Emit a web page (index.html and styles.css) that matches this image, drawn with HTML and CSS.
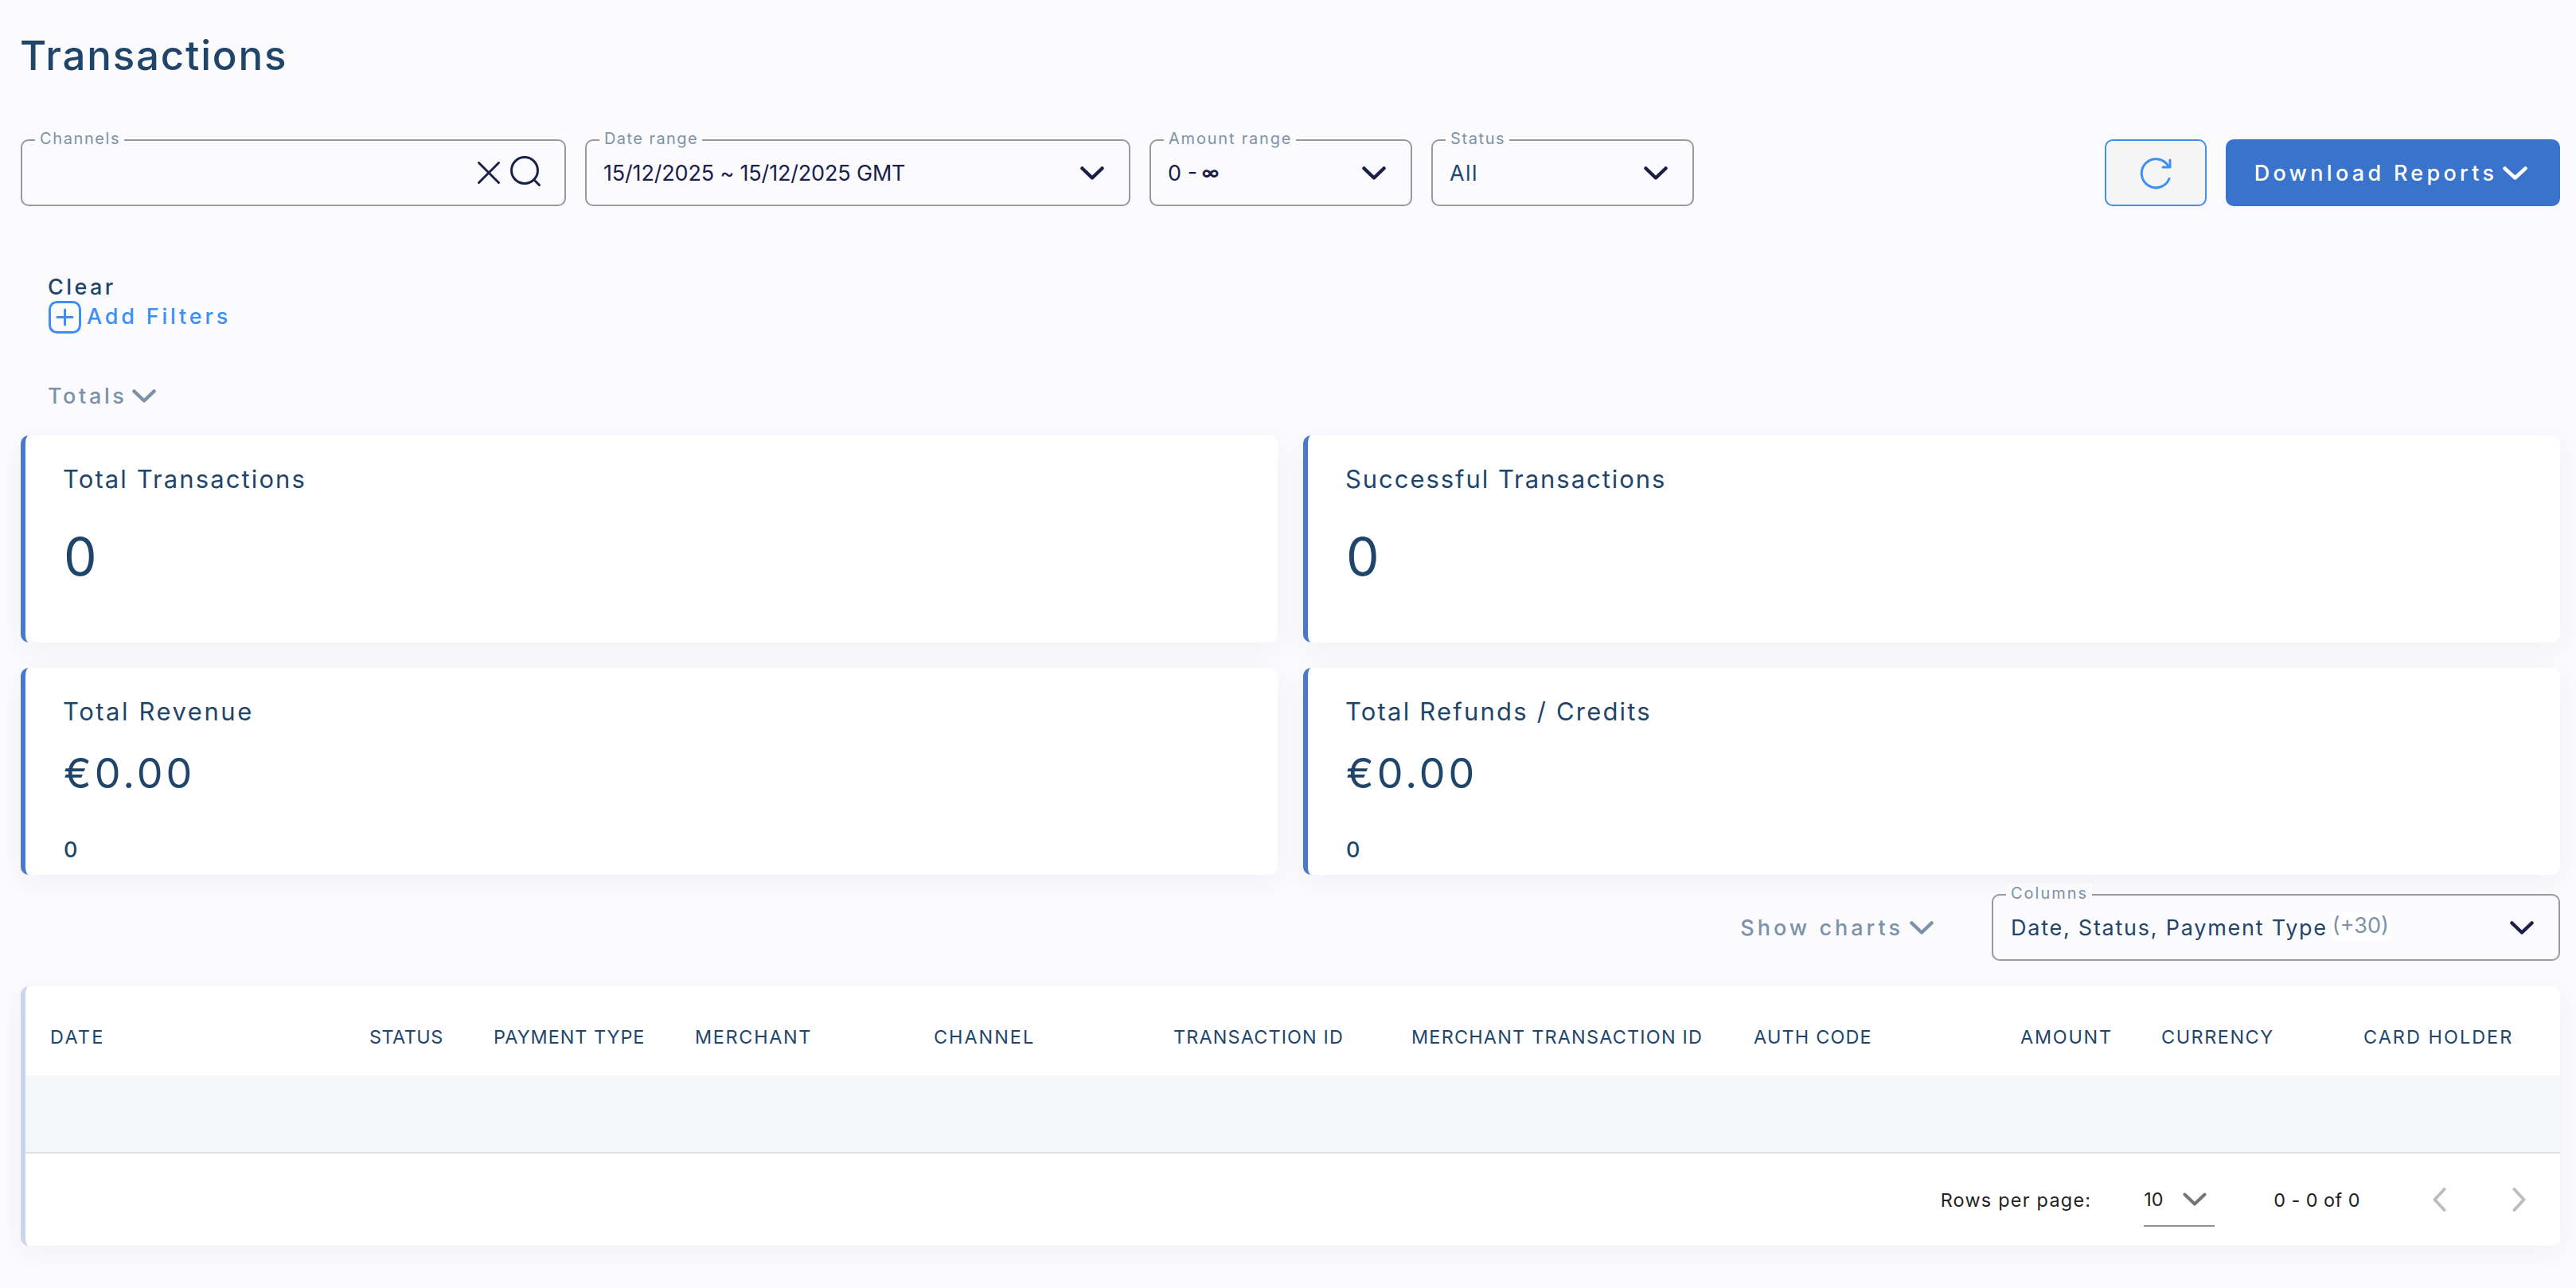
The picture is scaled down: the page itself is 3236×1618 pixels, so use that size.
FILE: index.html
```
<!DOCTYPE html>
<html lang="en">
<head>
    <meta charset="UTF-8">
    <meta name="viewport" content="width=device-width, initial-scale=1.0">
    <title>Transactions</title>
    <link rel="stylesheet" href="styles.css">
</head>
<body>
    <div class="page">
        <h1 class="title">Transactions</h1>

        <div class="filters">
            <div class="field field-wide">
                <span class="field-label label-channels">Channels</span>
                <svg class="icon-clear" width="30" height="30" viewBox="0 0 30 30"><path d="M2.5 2.5l25 25M27.5 2.5l-25 25"/></svg>
                <svg class="icon-search" width="38" height="38" viewBox="0 0 38 38"><circle cx="18" cy="18" r="16.5"/><path d="M30 30l6.5 6.5"/></svg>
            </div>
            <div class="field field-wide">
                <span class="field-label label-date">Date range</span>
                <span class="field-value value-date">15/12/2025 ~ 15/12/2025 GMT</span>
                <svg class="chevron" width="30" height="17" viewBox="0 0 30 17"><path d="M2.5 2.5L15 14.5l12.5-12"/></svg>
            </div>
            <div class="field">
                <span class="field-label label-amount">Amount range</span>
                <span class="field-value value-amount">0 - <b>∞</b></span>
                <svg class="chevron" width="30" height="17" viewBox="0 0 30 17"><path d="M2.5 2.5L15 14.5l12.5-12"/></svg>
            </div>
            <div class="field">
                <span class="field-label label-status">Status</span>
                <span class="field-value value-status">All</span>
                <svg class="chevron" width="30" height="17" viewBox="0 0 30 17"><path d="M2.5 2.5L15 14.5l12.5-12"/></svg>
            </div>
            <button class="refresh">
                <svg width="40" height="42" viewBox="0 0 40 42"><path d="M37 28.5A18 18 0 1 1 36 13"/><path d="M38 5V14H29"/></svg>
            </button>
            <button class="download">
                <span>Download Reports</span>
                <svg class="chevron" width="31" height="17" viewBox="0 0 31 17"><path d="M2.5 2.5l13 12 13-12"/></svg>
            </button>
        </div>

        <div class="links">
            <a class="clear">Clear</a>
            <a class="add-filters">
                <svg width="41" height="41" viewBox="0 0 41 41"><rect x="1.5" y="1.5" width="38" height="38" rx="9"/><path d="M20.5 11v19M11 20.5h19"/></svg>
                <span>Add Filters</span>
            </a>
            <a class="totals">
                <span>Totals</span>
                <svg class="chevron" width="30" height="17" viewBox="0 0 30 17"><path d="M2.5 2.5L15 14.5l12.5-12"/></svg>
            </a>
        </div>

        <div class="cards">
            <div class="card">
                <h2 class="name-total">Total Transactions</h2>
                <p class="count">0</p>
            </div>
            <div class="card">
                <h2 class="name-successful">Successful Transactions</h2>
                <p class="count">0</p>
            </div>
            <div class="card">
                <h2 class="name-revenue">Total Revenue</h2>
                <p class="sum">€0.00</p>
                <p class="small-count">0</p>
            </div>
            <div class="card">
                <h2 class="name-refunds">Total Refunds / Credits</h2>
                <p class="sum">€0.00</p>
                <p class="small-count">0</p>
            </div>
        </div>

        <div class="toolbar">
            <a class="show-charts">
                <span>Show charts</span>
                <svg class="chevron" width="30" height="17" viewBox="0 0 30 17"><path d="M2.5 2.5L15 14.5l12.5-12"/></svg>
            </a>
            <div class="field field-columns">
                <span class="field-label label-columns">Columns</span>
                <span class="field-value value-columns">Date, Status, Payment Type</span>
                <span class="more">(+30)</span>
                <svg class="chevron" width="30" height="17" viewBox="0 0 30 17"><path d="M2.5 2.5L15 14.5l12.5-12"/></svg>
            </div>
        </div>

        <div class="table">
            <div class="table-head">
                <span class="col-date">DATE</span>
                <span class="col-status">STATUS</span>
                <span class="col-type">PAYMENT TYPE</span>
                <span class="col-merchant">MERCHANT</span>
                <span class="col-channel">CHANNEL</span>
                <span class="col-id">TRANSACTION ID</span>
                <span class="col-merchant-id">MERCHANT TRANSACTION ID</span>
                <span class="col-auth">AUTH CODE</span>
                <span class="col-amount">AMOUNT</span>
                <span class="col-currency">CURRENCY</span>
                <span class="col-holder">CARD HOLDER</span>
            </div>
            <div class="table-empty"></div>
            <div class="pagination">
                <span class="rows-label">Rows per page:</span>
                <div class="rows-select">
                    <span>10</span>
                    <svg class="chevron" width="30" height="17" viewBox="0 0 30 17"><path d="M2.5 2.5L15 14.5l12.5-12"/></svg>
                </div>
                <span class="rows-range">0 - 0 of 0</span>
                <svg class="arrow" width="17" height="30" viewBox="0 0 17 30"><path d="M14.5 2L2.5 15l12 13"/></svg>
                <svg class="arrow" width="17" height="30" viewBox="0 0 17 30"><path d="M2.5 2l12 13-12 13"/></svg>
            </div>
        </div>
    </div>
</body>
</html>
```
FILE: styles.css
```
* {
    box-sizing: border-box;
}
body {
    margin: 0;
    background-color: #fbfbfe;
    color: #1f456a;
    font-family: Inter, "Open Sans", sans-serif;
    font-size: 27px;
}
h1, h2, p {
    margin: 0;
    font-weight: 400;
}
svg {
    display: block;
    flex: none;
    fill: none;
    stroke: currentColor;
    stroke-width: 3;
    stroke-linecap: round;
    stroke-linejoin: round;
}
.chevron {
    stroke-width: 4.5;
}
.page {
    padding: 40px 20px 53px 26px;
}
.title {
    font-size: 51px;
    line-height: 60px;
    font-weight: 500;
    letter-spacing: 1.8px;
    margin-left: -1px;
}

/* filter bar */
.filters {
    display: flex;
    gap: 24px;
    margin-top: 75px;
    height: 84px;
}
.field {
    position: relative;
    display: flex;
    align-items: center;
    width: 330px;
    height: 84px;
    padding: 0 31px 0 21px;
    border: 2px solid #999;
    border-radius: 10px;
    color: #1a2048;
}
.field-wide {
    width: 685px;
}
.field-label {
    position: absolute;
    top: -15px;
    left: 16px;
    padding: 0 5px 0 6px;
    background-color: #fbfbfe;
    color: #7c92a8;
    font-size: 20px;
    line-height: 25px;
}
.field .chevron,
.icon-clear {
    margin-left: auto;
}
.icon-clear {
    margin-right: 12px;
}
.icon-search {
    margin-top: -5px;
    margin-right: -1px;
}
.label-channels {
    letter-spacing: 1.6px;
}
.label-date {
    letter-spacing: 1.43px;
}
.label-amount {
    letter-spacing: 1.8px;
}
.label-status {
    letter-spacing: 1.6px;
}
.label-columns {
    letter-spacing: 1.98px;
}
.value-date {
    letter-spacing: -0.17px;
}
.value-amount b {
    font-size: 22px;
    position: relative;
    top: -2px;
    left: -2px;
}
.value-status {
    color: #1f456a;
    letter-spacing: 1.4px;
}
.refresh,
.download {
    display: flex;
    align-items: center;
    justify-content: center;
    height: 84px;
    border-radius: 10px;
    font-family: inherit;
    font-size: 27px;
}
.refresh {
    width: 128px;
    margin-left: auto;
    border: 2px solid #3f8ef2;
    background-color: #f5f5f5;
    color: #3f8ef2;
}
.download {
    width: 420px;
    padding: 0 5px 0 0;
    border: 0;
    background-color: #3973cc;
    color: #fff;
    font-weight: 500;
    letter-spacing: 4.3px;
    gap: 7px;
}

/* links under the filters */
.links {
    padding-left: 34px;
    margin-top: 84px;
    font-weight: 500;
}
.clear {
    display: block;
    line-height: 36px;
    height: 35px;
    letter-spacing: 3.4px;
}
.add-filters {
    display: flex;
    align-items: center;
    gap: 7px;
    height: 40px;
    padding-left: 1px;
    color: #3f8ef5;
    letter-spacing: 3.8px;
}
.add-filters span {
    margin-top: -2px;
}
.totals {
    display: flex;
    align-items: center;
    gap: 7px;
    height: 40px;
    margin-top: 59px;
    color: #7c92a8;
    letter-spacing: 3.6px;
}

/* totals */
.cards {
    display: grid;
    grid-template-columns: 1fr 1fr;
    grid-auto-rows: 260px;
    gap: 32px;
    margin-top: 30px;
}
.card,
.table {
    background-color: #fff;
    border-left: 6px solid #4a7ac7;
    border-radius: 10px;
    box-shadow: 0 8px 32px rgba(50, 40, 110, 0.055);
}
.card {
    padding: 35px 48px 0;
}
.card h2 {
    font-size: 31px;
    line-height: 40px;
    margin-left: -1px;
}
.name-total {
    letter-spacing: 2.1px;
}
.name-successful {
    letter-spacing: 1.95px;
}
.name-revenue {
    letter-spacing: 2.55px;
}
.name-refunds {
    letter-spacing: 2.2px;
}
.count {
    margin-top: 37px;
    font-size: 66px;
    line-height: 80px;
}
.sum {
    margin-top: 28px;
    font-size: 52px;
    line-height: 60px;
    letter-spacing: 4px;
}
.small-count {
    margin-top: 49px;
    line-height: 34px;
    font-weight: 500;
}

/* charts toggle and column picker */
.toolbar {
    display: flex;
    justify-content: flex-end;
    align-items: center;
    gap: 73px;
    margin-top: 24px;
}
.show-charts {
    display: flex;
    align-items: center;
    gap: 8px;
    color: #7c92a8;
    font-weight: 500;
    letter-spacing: 4px;
}
.field-columns {
    width: 714px;
    padding-left: 22px;
}
.value-columns {
    color: #1f456a;
    letter-spacing: 1.75px;
}
.more {
    margin: -4px 0 0 5px;
    padding: 0 2px 0 1px;
    background-color: #fff;
    color: #7c92a8;
    line-height: 36px;
}

/* transactions table */
.table {
    margin-top: 32px;
    border-left-color: #cbd6eb;
    font-size: 23.4px;
}
.table-head {
    display: grid;
    grid-template-columns: 401px 156px 253px 300px 301px 299px 430px 335px 177px 254px 1fr;
    height: 112px;
    padding-top: 50px;
    line-height: 28px;
}
.table-head span {
    padding-left: 31px;
    white-space: nowrap;
}
.col-date {
    letter-spacing: 2.3px;
}
.col-status {
    letter-spacing: 0.5px;
}
.col-type {
    letter-spacing: 1px;
}
.col-merchant {
    letter-spacing: 1.7px;
}
.col-channel {
    letter-spacing: 2px;
}
.col-id {
    letter-spacing: 1.15px;
}
.col-merchant-id {
    letter-spacing: 1.22px;
}
.col-auth {
    letter-spacing: 1.2px;
}
.col-amount {
    letter-spacing: 1.76px;
}
.col-currency {
    letter-spacing: 1.55px;
}
.col-holder {
    letter-spacing: 2.05px;
}
.table-empty {
    height: 98px;
    background-color: #f5f6f8;
    border-bottom: 2px solid #e0e0e0;
}
.pagination {
    display: flex;
    align-items: center;
    justify-content: flex-end;
    height: 116px;
    padding-right: 43px;
    color: #222;
}
.rows-label {
    letter-spacing: 1.25px;
}
.rows-select {
    display: flex;
    align-items: center;
    justify-content: space-between;
    width: 89px;
    height: 68px;
    margin-left: 66px;
    padding-right: 10px;
    border-bottom: 2px solid #919191;
}
.rows-select .chevron {
    color: #757575;
    stroke-width: 4;
}
.rows-range {
    margin-left: 74px;
    margin-right: 8px;
    letter-spacing: 0.47px;
}
.arrow {
    margin-left: 83px;
    color: #bdbdbd;
    stroke-width: 4;
}
```
